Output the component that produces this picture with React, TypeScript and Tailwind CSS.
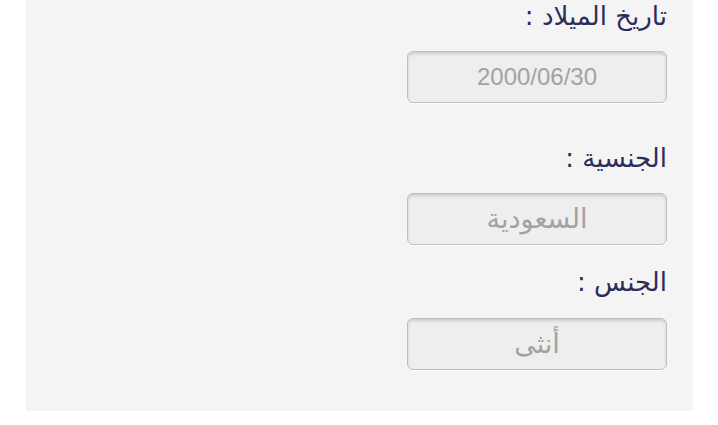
import React from 'react';

const fields = [
  { label: 'تاريخ الميلاد :', value: '2000/06/30', latin: true, labelGap: 'mt-0', inputGap: 'mt-[19px]' },
  { label: 'الجنسية :', value: 'السعودية', latin: false, labelGap: 'mt-[39px]', inputGap: 'mt-[19px]' },
  { label: 'الجنس :', value: 'أنثى', latin: false, labelGap: 'mt-[21px]', inputGap: 'mt-[20px]' },
];

export default function App() {
  return (
    <div className="w-[718px] h-[425px] bg-white" style={{ fontFamily: '"DejaVu Sans", sans-serif' }}>
      <div dir="rtl" className="ml-[26px] w-[667px] bg-[#f4f4f4] pr-[26px] pb-[41px] flex flex-col items-start">
        {fields.map(f => (
          <React.Fragment key={f.label}>
            <div className={`${f.labelGap} h-[32px] leading-[32px] text-[26px] text-[#2c2d5b]`}>{f.label}</div>
            <div
              className={`${f.inputGap} w-[260px] h-[52px] rounded-[6px] border border-[#bfbfbf] bg-[#eeeeee] shadow-[inset_0_2px_3px_rgba(0,0,0,0.14),0_1px_0_#ffffff] flex items-center justify-center text-[#a2a2a2] ${f.latin ? 'text-[24px]' : 'text-[27px]'}`}
              style={f.latin ? { fontFamily: '"Liberation Sans", sans-serif' } : undefined}
            >
              {f.value}
            </div>
          </React.Fragment>
        ))}
      </div>
    </div>
  );
}
